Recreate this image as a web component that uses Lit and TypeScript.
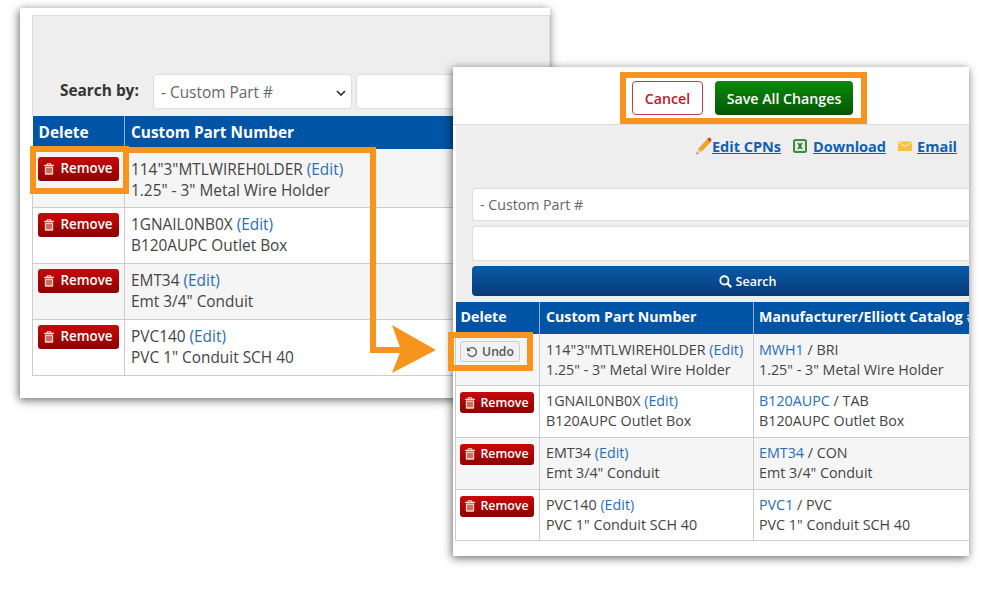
import { LitElement, html, css, svg } from 'lit';
import { customElement } from 'lit/decorators.js';

type Row = { cpn: string; desc: string; mfr: string; tag: string };

const ROWS: Row[] = [
  { cpn: '114"3"MTLWIREH0LDER', desc: '1.25" - 3" Metal Wire Holder', mfr: 'MWH1', tag: 'BRI' },
  { cpn: '1GNAIL0NB0X', desc: 'B120AUPC Outlet Box', mfr: 'B120AUPC', tag: 'TAB' },
  { cpn: 'EMT34', desc: 'Emt 3/4" Conduit', mfr: 'EMT34', tag: 'CON' },
  { cpn: 'PVC140', desc: 'PVC 1" Conduit SCH 40', mfr: 'PVC1', tag: 'PVC' },
];

const trash = html`<svg class="ico" viewBox="0 0 12 14">
  <path fill="currentColor" d="M3.6 0h4.8l.7 1.8H12v1.5H0V1.8h2.9zM4.7 1.2l-.3.6h3.2l-.3-.6zM1 4h10v8.6c0 .8-.6 1.4-1.4 1.4H2.4C1.6 14 1 13.4 1 12.6zm2 1.6v6.6h1.2V5.6zm2.4 0v6.6h1.2V5.6zm2.4 0v6.6H9V5.6z"/>
</svg>`;

const undo = html`<svg class="ico undo-ico" viewBox="0 0 14 14">
  <path fill="none" stroke="currentColor" stroke-width="1.5" d="M3.2 3.4A5.2 5.2 0 1 1 2 8.6"/>
  <path fill="currentColor" d="M1 1.2 1.2 6l4.6-.3z"/>
</svg>`;

const chevron = html`<svg class="chev" viewBox="0 0 10 6">
  <path fill="none" stroke="#333" stroke-width="1.7" d="M1 1l4 4 4-4"/>
</svg>`;

const pencil = html`<svg class="pencil" viewBox="0 0 16 16">
  <path fill="#e9a52c" d="M3.6 10.4 11.6 2l3 2.8-8 8.4z"/>
  <path fill="#c9482e" d="M11.6 2l1.2-1.2c.5-.4 1.1-.4 1.5 0l1 1c.4.4.4 1 0 1.5l-.7 1.5z"/>
  <path fill="#e8cfa6" d="M3.6 10.4l3 2.8L2 15.4z"/>
  <path fill="#555" d="M2.8 13.6 2 15.4l1.9-.8z"/>
</svg>`;

const sheet = html`<svg class="sheet" viewBox="0 0 14 14">
  <rect x="1" y="1" width="12" height="12" rx="1.5" fill="#dcecd8" stroke="#3f8a42" stroke-width="2"/>
  <path fill="#2f6d33" d="M4.4 4h1.8L7 5.6 7.8 4h1.8L8 7l1.6 3H7.8L7 8.4 6.2 10H4.4L6 7z"/>
</svg>`;

const mail = html`<svg class="mail" viewBox="0 0 14 10">
  <rect y=".4" width="14" height="9.6" rx=".8" fill="#f5c33b"/>
  <path fill="none" stroke="#fbe49a" stroke-width="1.2" d="M.4 1l6.6 4.6L13.6 1"/>
</svg>`;

@customElement('app-root')
export class AppRoot extends LitElement {
  static styles = css`
    :host {
      display: block;
      position: relative;
      width: 1000px;
      height: 600px;
      overflow: hidden;
      background: #fff;
      font-family: 'Open Sans', 'Noto Sans', sans-serif;
      color: #444;
    }
    .card {
      position: absolute;
      background: #fff;
      overflow: hidden;
      box-sizing: border-box;
      box-shadow: -1px 2px 9px rgba(0, 0, 0, 0.6);
    }
    .back {
      left: 20px;
      top: 8px;
      width: 530px;
      height: 390px;
      padding: 7px 0 0 12px;
    }
    .front {
      left: 453px;
      top: 67px;
      width: 516px;
      height: 489px;
    }

    /* back card search strip */
    .strip {
      height: 101px;
      box-sizing: border-box;
      background: #eee;
      border: 1px solid #ddd;
      border-bottom: 0;
      display: flex;
      align-items: flex-start;
      padding: 58px 0 0 27px;
      gap: 4px;
    }
    .strip label {
      font-weight: 700;
      font-size: 15.4px;
      line-height: 33px;
      color: #333;
      width: 89px;
    }
    .field {
      box-sizing: border-box;
      background: #fff;
      border: 1px solid #ddd;
      border-radius: 4px;
      display: flex;
      align-items: center;
      justify-content: space-between;
      padding: 0 6px;
      color: #666;
    }
    .strip .field { height: 35px; font-size: 15.4px; }
    .strip .select { width: 199px; padding: 2px 5px 0 7px; }
    .strip .blank { flex: 1; }
    .chev { width: 10px; height: 6px; }

    /* front card top bar */
    .actions {
      height: 58px;
      box-sizing: border-box;
      display: flex;
      align-items: flex-start;
      gap: 12px;
      padding: 14px 0 0 179px;
      border-bottom: 1px solid #ddd;
    }
    .btn {
      box-sizing: border-box;
      height: 34px;
      border-radius: 4px;
      display: flex;
      align-items: center;
      justify-content: center;
      font-weight: 600;
      font-size: 14.2px;
    }
    .cancel {
      width: 71px;
      background: #fff;
      border: 1px solid #c23a4a;
      color: #c0182a;
    }
    .save {
      width: 138px;
      color: #fff;
      background: linear-gradient(#0a8a0a, #045504);
    }

    /* front card filter panel */
    .panel {
      height: 177px;
      box-sizing: border-box;
      margin-left: 3px;
      background: #eee;
      display: flex;
      flex-direction: column;
      padding: 9px 0 0 16px;
    }
    .links {
      display: flex;
      justify-content: flex-end;
      align-items: center;
      gap: 12px;
      height: 24px;
      padding-right: 12px;
      margin-bottom: 30px;
    }
    .links a {
      display: flex;
      align-items: center;
      gap: 4px;
      color: #0f5fb5;
      font-weight: 700;
      font-size: 14.5px;
    }
    .links a span { text-decoration: underline; }
    .links svg { flex: none; }
    .links .edit { gap: 0; }
    .pencil { width: 18px; height: 18px; }
    .sheet { width: 14px; height: 14px; margin-right: 2px; }
    .mail { width: 14px; height: 10px; margin-right: 1px; }
    .panel .field {
      margin-bottom: 5px;
      border-radius: 4px 0 0 4px;
      border-right: 0;
      font-size: 14.2px;
      padding: 0 7px;
    }
    .panel .select { height: 33px; }
    .panel .blank { height: 35px; }
    .search {
      height: 30px;
      border-radius: 4px 0 0 4px;
      background: linear-gradient(#0a5aa8, #063b78);
      color: #fff;
      font-weight: 600;
      font-size: 12.5px;
      display: flex;
      align-items: center;
      justify-content: center;
      gap: 4px;
      padding-left: 54px;
    }
    .search svg { width: 13px; height: 13px; }

    /* tables */
    table {
      border-collapse: collapse;
      table-layout: fixed;
    }
    .back table { width: 560px; font-size: 15.4px; }
    .front table { width: 580px; margin-left: 2px; font-size: 14.3px; }
    th {
      background: #0054a6;
      color: #fff;
      font-weight: 700;
      text-align: left;
      padding: 0 6px;
      border-right: 1px solid #8fb0d4;
      white-space: nowrap;
      overflow: hidden;
    }
    td {
      vertical-align: top;
      padding: 6px 6px 0;
      line-height: 20px;
      border: 1px solid #ccc;
      border-top: 0;
      white-space: nowrap;
    }
    tbody tr:nth-child(odd) td { background: #f5f5f5; }
    .back thead tr { height: 33px; }
    .front thead tr { height: 32px; }

    .back tbody tr { height: 56px; }
    .back tbody tr:first-child { height: 58px; }
    .back td { line-height: 21.5px; }
    .back tbody tr:first-child td { padding-top: 9.75px; }
    .back .remove { margin-top: -1px; }
    .back tbody tr:first-child .remove { margin-top: -1.75px; }

    .front tbody tr { height: 51.7px; }
    .front th { font-size: 14.2px; padding: 0 5px 3px; }
    .front th:nth-child(2) { padding-left: 6px; }
    .front td { padding: 5px 5px 0; }
    .front td:nth-child(2) { padding-left: 6px; }
    .front tbody tr:first-child td { padding-top: 6px; }
    td a { color: #2a6eb5; }

    .remove, .undo {
      box-sizing: border-box;
      display: inline-flex;
      align-items: center;
      justify-content: center;
      border-radius: 3px;
      font-weight: 600;
      vertical-align: top;
    }
    .remove {
      color: #fff;
      background: linear-gradient(#c80a0a, #8e0000);
    }
    .back .remove {
      width: 81px;
      height: 24px;
      font-size: 13.4px;
      gap: 6px;
      margin-left: -1px;
    }
    .front .remove {
      width: 74px;
      height: 21px;
      font-size: 12.4px;
      gap: 5px;
      margin-left: -1px;
      margin-top: 1px;
    }
    .undo {
      width: 60px;
      height: 21px;
      gap: 4px;
      font-size: 12.2px;
      color: #555;
      background: #f1f1f1;
      border: 1px solid #ccc;
      margin-left: -1px;
      margin-top: 1px;
    }
    .ico { width: 10px; height: 12px; flex: none; }
    .undo-ico { width: 12px; height: 12px; }
    .remove .ico { color: #f6d8c8; }

    /* orange callouts sit over both cards */
    .callouts {
      position: absolute;
      inset: 0;
      width: 1000px;
      height: 600px;
      pointer-events: none;
    }
  `;

  private renderTable(side: 'back' | 'front') {
    const isFront = side === 'front';
    return html`
      <table>
        <colgroup>
          <col style="width:${isFront ? 84 : 92}px" />
          <col style="width:${isFront ? 214 : 430}px" />
          <col />
        </colgroup>
        <thead>
          <tr>
            <th>Delete</th>
            <th>Custom Part Number</th>
            <th>${isFront ? 'Manufacturer/Elliott Catalog #' : ''}</th>
          </tr>
        </thead>
        <tbody>
          ${ROWS.map(
            (r, i) => html`
              <tr>
                <td>
                  ${isFront && i === 0
                    ? html`<span class="undo">${undo}Undo</span>`
                    : html`<span class="remove">${trash}Remove</span>`}
                </td>
                <td>${r.cpn} <a>(Edit)</a><br />${r.desc}</td>
                <td>${isFront ? html`<a>${r.mfr}</a> / ${r.tag}<br />${r.desc}` : ''}</td>
              </tr>
            `,
          )}
        </tbody>
      </table>
    `;
  }

  render() {
    return html`
      <section class="card back">
        <div class="strip">
          <label>Search by:</label>
          <div class="field select">- Custom Part # ${chevron}</div>
          <div class="field blank"></div>
        </div>
        ${this.renderTable('back')}
      </section>

      <section class="card front">
        <div class="actions">
          <div class="btn cancel">Cancel</div>
          <div class="btn save">Save All Changes</div>
        </div>
        <div class="panel">
          <div class="links">
            <a class="edit">${pencil}<span>Edit CPNs</span></a>
            <a>${sheet}<span>Download</span></a>
            <a>${mail}<span>Email</span></a>
          </div>
          <div class="field select">- Custom Part #</div>
          <div class="field blank"></div>
          <div class="search">
            <svg viewBox="0 0 14 14">
              <circle cx="5.8" cy="5.8" r="4.4" fill="none" stroke="currentColor" stroke-width="2" />
              <path stroke="currentColor" stroke-width="2.4" d="M9 9l4.2 4.2" />
            </svg>
            Search
          </div>
        </div>
        ${this.renderTable('front')}
      </section>

      <svg class="callouts" viewBox="0 0 1000 600">
        ${svg`
          <g fill="none" stroke="#f7941d" stroke-width="6">
            <rect x="33" y="149" width="93" height="42" />
            <path d="M126 150H373V350H405" />
            <rect x="451" y="335" width="79" height="33" />
            <rect x="623" y="75" width="241" height="46" />
          </g>
          <path fill="#f7941d" d="M392 325 436 350 392 373 401 350z" />
        `}
      </svg>
    `;
  }
}
